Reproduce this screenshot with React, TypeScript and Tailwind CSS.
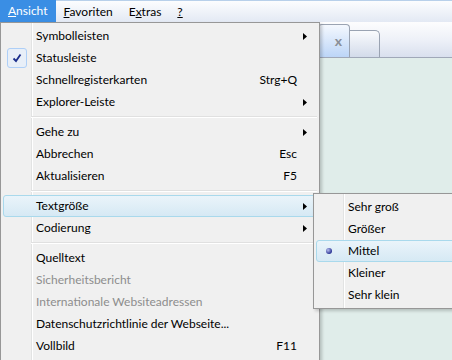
import React from 'react';

// Windows 7 style IE menu: "Ansicht" open with the "Textgröße" submenu

type Item =
  | { type: 'sep' }
  | {
      type?: 'item';
      label: string;
      shortcut?: string;
      sub?: boolean;
      checked?: boolean;
      disabled?: boolean;
      active?: boolean;
    };

const mainItems: Item[] = [
  { label: 'Symbolleisten', sub: true },
  { label: 'Statusleiste', checked: true },
  { label: 'Schnellregisterkarten', shortcut: 'Strg+Q' },
  { label: 'Explorer-Leiste', sub: true },
  { type: 'sep' },
  { label: 'Gehe zu', sub: true },
  { label: 'Abbrechen', shortcut: 'Esc' },
  { label: 'Aktualisieren', shortcut: 'F5' },
  { type: 'sep' },
  { label: 'Textgröße', sub: true, active: true },
  { label: 'Codierung', sub: true },
  { type: 'sep' },
  { label: 'Quelltext' },
  { label: 'Sicherheitsbericht', disabled: true },
  { label: 'Internationale Websiteadressen', disabled: true },
  { label: 'Datenschutzrichtlinie der Webseite...' },
  { label: 'Vollbild', shortcut: 'F11' },
];

const sizes = ['Sehr groß', 'Größer', 'Mittel', 'Kleiner', 'Sehr klein'];

const Arrow = () => (
  <svg width="4" height="7" viewBox="0 0 4 7" className="block">
    <path d="M0 0 L4 3.5 L0 7 Z" fill="#000" />
  </svg>
);

const Check = () => (
  <div className="w-[20px] h-[20px] rounded-[3px] border border-[#aecff7] bg-[#e8eff8] flex items-center justify-center">
    <svg width="10" height="10" viewBox="0 0 10 10">
      <path d="M1.5 5.5 L4 8 L8.5 1.5" stroke="#1c2e8c" strokeWidth="1.8" fill="none" />
    </svg>
  </div>
);

const Radio = () => (
  <span className="block w-[6px] h-[6px] rounded-full bg-[radial-gradient(circle_at_35%_35%,#b9c0ee,#2b3596_70%)]" />
);

const Highlight = () => (
  <div className="absolute inset-x-0 inset-y-0 rounded-[3px] border border-[#a9d9ec] bg-gradient-to-b from-[#eaf4fa] to-[#d6e9f4]" />
);

const MenuRow: React.FC<{ item: Extract<Item, { label: string }> }> = ({ item }) => (
  <div className="relative h-[22px] flex items-center">
    {item.active && <Highlight />}
    <div className="relative w-[26px] h-full flex items-center justify-center ml-[1px]">
      {item.checked && <Check />}
    </div>
    <span className={`relative pl-[6px] flex-1 ${item.disabled ? 'text-[#8d8d8d]' : 'text-black'}`}>
      {item.label}
    </span>
    {item.shortcut && <span className="relative pr-[6px]">{item.shortcut}</span>}
    <div className="relative w-[10px] mr-[4px] flex justify-start">{item.sub && <Arrow />}</div>
  </div>
);

const Separator = () => (
  <div className="h-[8px] flex items-center pl-[28px]">
    <div className="flex-1 border-t border-[#e0e0e0] border-b border-b-white" />
  </div>
);

export default function App() {
  return (
    <div className="relative w-[452px] h-[360px] overflow-hidden bg-[#e0edea] font-['Lato','Noto_Sans',sans-serif] text-[12px] leading-none text-black">
      {/* menu bar */}
      <div className="h-[22px] flex items-stretch border-t border-[#b8d0ea] bg-gradient-to-b from-[#fcfdfe] to-[#e3e9f4]">
        <div className="px-[8px] flex items-center bg-[#3a8ee4] text-white -mt-[1px]">
          <span><u>A</u>nsicht</span>
        </div>
        <div className="px-[8px] flex items-center"><span><u>F</u>avoriten</span></div>
        <div className="px-[8px] flex items-center"><span>E<u>x</u>tras</span></div>
        <div className="px-[8px] flex items-center"><u>?</u></div>
      </div>

      {/* tab strip */}
      <div className="h-[36px] flex items-end pl-[318px] border-b border-[#a0a8b8] bg-gradient-to-b from-[#fdfdfe] via-[#eef1f8] to-[#d9e0ee]">
        <div className="w-[32px] h-[33px] rounded-t-[4px] border border-b-0 border-[#9aa3b2] bg-gradient-to-b from-[#f4f8fe] to-[#bcd5f7] flex items-center justify-end pr-[7px]">
          <span className="text-[#8a8f97] font-bold text-[14px]">x</span>
        </div>
        <div className="w-[30px] h-[27px] rounded-tr-[5px] border border-b-0 border-l-0 border-[#9aa3b2] bg-gradient-to-b from-[#fafbfd] to-[#d3dbea]" />
      </div>

      {/* main menu */}
      <div className="absolute left-0 top-[22px] w-[320px] h-[345px] border border-[#979797] bg-[#f0f0f0] p-[2px] shadow-[2px_2px_3px_rgba(0,0,0,0.2)]">
        <div className="absolute left-[30px] top-0 bottom-0 w-[2px] border-l border-[#e2e3e3] bg-white" />
        <div className="relative">
          {mainItems.map((it, i) =>
            it.type === 'sep' ? <Separator key={i} /> : <MenuRow key={i} item={it as Extract<Item, { label: string }>} />
          )}
        </div>
      </div>

      {/* submenu Textgröße */}
      <div className="absolute left-[313px] top-[193px] w-[145px] border border-[#979797] bg-[#f0f0f0] p-[2px] shadow-[2px_2px_3px_rgba(0,0,0,0.2)]">
        <div className="absolute left-[29px] top-0 bottom-0 w-[2px] border-l border-[#e2e3e3] bg-white" />
        <div className="relative">
          {sizes.map((s) => (
            <div key={s} className="relative h-[22px] flex items-center">
              {s === 'Mittel' && <Highlight />}
              <div className="relative w-[26px] h-full flex items-center justify-center">
                {s === 'Mittel' && <Radio />}
              </div>
              <span className="relative pl-[6px]">{s}</span>
            </div>
          ))}
        </div>
      </div>
    </div>
  );
}
